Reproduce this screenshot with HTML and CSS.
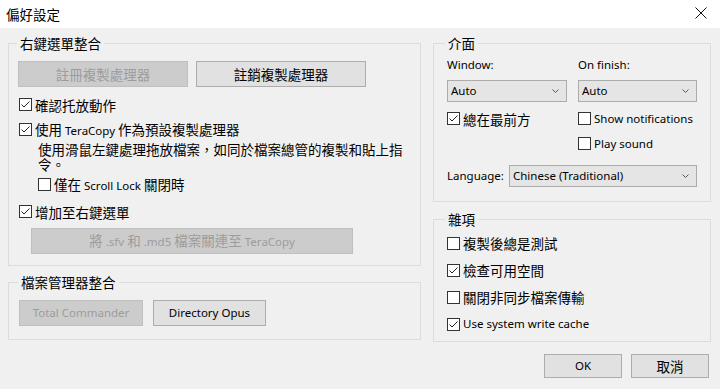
FILE: index.html
```html
<!DOCTYPE html>
<html lang="zh-Hant">
<head>
    <meta charset="UTF-8">
    <title>偏好設定</title>
    <link rel="stylesheet" href="styles.css">
</head>
<body>
    <div class="titlebar">
        <span class="title">偏好設定</span>
        <svg class="close" width="12" height="12" viewBox="0 0 12 12">
            <path d="M0.5 0.5 L11.5 11.5 M11.5 0.5 L0.5 11.5" stroke="#111" stroke-width="1" fill="none"/>
        </svg>
    </div>

    <div class="dialog">
        <div class="col-left">
            <fieldset class="group g-shell">
                <legend>右鍵選單整合</legend>
                <div class="btn-row">
                    <button class="btn btn-wide" disabled>註冊複製處理器</button>
                    <button class="btn btn-wide">註銷複製處理器</button>
                </div>
                <label class="check">
                    <span class="box"><svg viewBox="0 0 11 11"><path d="M1.5 5.5 L4 8 L9.5 2.5"/></svg></span><span>確認托放動作</span>
                </label>
                <label class="check">
                    <span class="box"><svg viewBox="0 0 11 11"><path d="M1.5 5.5 L4 8 L9.5 2.5"/></svg></span><span>使用 <span class="en">TeraCopy</span> 作為預設複製處理器</span>
                </label>
                <p class="desc">使用滑鼠左鍵處理拖放檔案，如同於檔案總管的複製和貼上指令。</p>
                <label class="check indent">
                    <span class="box"></span><span>僅在 <span class="en">Scroll Lock</span> 關閉時</span>
                </label>
                <label class="check check-menu">
                    <span class="box"><svg viewBox="0 0 11 11"><path d="M1.5 5.5 L4 8 L9.5 2.5"/></svg></span><span>增加至右鍵選單</span>
                </label>
                <button class="btn btn-assoc" disabled><span>將 <span class="en">.sfv</span> 和 <span class="en">.md5</span> 檔案關連至 <span class="en">TeraCopy</span></span></button>
            </fieldset>

            <fieldset class="group g-fm">
                <legend>檔案管理器整合</legend>
                <div class="btn-row">
                    <button class="btn en btn-tc" disabled>Total Commander</button>
                    <button class="btn en btn-do">Directory Opus</button>
                </div>
            </fieldset>
        </div>

        <div class="col-right">
            <fieldset class="group g-ui">
                <legend>介面</legend>
                <div class="ui-grid">
                    <div class="field">
                        <div class="field-label en">Window:</div>
                        <div class="select en">Auto<svg width="7" height="4" viewBox="0 0 7 4"><path d="M0.5 0.5 L3.5 3.5 L6.5 0.5"/></svg></div>
                        <label class="check">
                            <span class="box"><svg viewBox="0 0 11 11"><path d="M1.5 5.5 L4 8 L9.5 2.5"/></svg></span><span>總在最前方</span>
                        </label>
                    </div>
                    <div class="field">
                        <div class="field-label en">On finish:</div>
                        <div class="select en">Auto<svg width="7" height="4" viewBox="0 0 7 4"><path d="M0.5 0.5 L3.5 3.5 L6.5 0.5"/></svg></div>
                        <label class="check en">
                            <span class="box"></span><span>Show notifications</span>
                        </label>
                        <label class="check en">
                            <span class="box"></span><span>Play sound</span>
                        </label>
                    </div>
                </div>
                <div class="lang-row">
                    <span class="field-label en">Language:</span>
                    <div class="select select-lang en">Chinese (Traditional)<svg width="7" height="4" viewBox="0 0 7 4"><path d="M0.5 0.5 L3.5 3.5 L6.5 0.5"/></svg></div>
                </div>
            </fieldset>

            <fieldset class="group g-misc">
                <legend>雜項</legend>
                <label class="check">
                    <span class="box"></span><span>複製後總是測試</span>
                </label>
                <label class="check">
                    <span class="box"><svg viewBox="0 0 11 11"><path d="M1.5 5.5 L4 8 L9.5 2.5"/></svg></span><span>檢查可用空間</span>
                </label>
                <label class="check">
                    <span class="box"></span><span>關閉非同步檔案傳輸</span>
                </label>
                <label class="check en">
                    <span class="box"><svg viewBox="0 0 11 11"><path d="M1.5 5.5 L4 8 L9.5 2.5"/></svg></span><span>Use system write cache</span>
                </label>
            </fieldset>

            <div class="footer">
                <button class="btn btn-foot en">OK</button>
                <button class="btn btn-foot">取消</button>
            </div>
        </div>
    </div>
</body>
</html>
```

FILE: styles.css
```css
body {
    margin: 0;
    padding: 0;
    width: 720px;
    height: 389px;
    overflow: hidden;
    background-color: #f0f0f0;
    color: #000;
    font-family: "Noto Sans CJK TC", "Noto Sans", sans-serif;
    font-size: 13.5px;
}
.en {
    font-family: "Noto Sans", "Noto Sans CJK TC", sans-serif;
    font-size: 11.5px;
}
.titlebar {
    height: 28px;
    background-color: #fff;
    display: flex;
    align-items: center;
    justify-content: space-between;
    padding: 0 13px 0 6px;
}
.title {
    line-height: 18px;
}
.close {
    display: block;
    margin-top: -2px;
}
.dialog {
    display: flex;
    gap: 12px;
    padding: 6px 9px 0 8px;
}
.col-left {
    width: 413px;
}
.col-right {
    width: 278px;
}
fieldset.group {
    margin: 0;
    border: 1px solid #dcdcdc;
    min-width: 0;
}
fieldset.group legend {
    padding: 0 3px;
    margin-left: -2px;
    line-height: 18px;
}

/* left column */
.g-shell {
    padding: 9px 10px 11px 10px;
}
.g-fm {
    margin-top: 7px !important;
    padding: 9px 10px 13px 11px;
}
.btn-row {
    display: flex;
    gap: 8px;
    margin-left: -1px;
}
.btn {
    display: flex;
    align-items: center;
    justify-content: center;
    height: 26px;
    padding: 0;
    margin: 0;
    background-color: #e1e1e1;
    border: 1px solid #adadad;
    color: #000;
    font-family: "Noto Sans CJK TC", "Noto Sans", sans-serif;
    font-size: 13.5px;
    line-height: 18px;
}
.btn.en {
    font-family: "Noto Sans", "Noto Sans CJK TC", sans-serif;
    font-size: 11.5px;
}
.btn:disabled {
    background-color: #cccccc;
    border-color: #bfbfbf;
    color: #9c9c9c;
}
.btn-wide {
    width: 170px;
}
.check {
    display: flex;
    align-items: center;
    height: 25px;
    line-height: 18px;
    white-space: nowrap;
}
.box {
    flex: none;
    width: 11px;
    height: 11px;
    border: 1px solid #333;
    background-color: #fff;
    margin-right: 3px;
}
.box svg {
    display: block;
    width: 11px;
    height: 11px;
    fill: none;
    stroke: #222;
    stroke-width: 1;
}
.g-shell .btn-row + .check {
    margin-top: 5px;
}
.desc {
    margin: 0 0 0 19px;
    width: 375px;
    line-height: 15px;
}
.indent {
    margin-left: 19px;
}
.check-menu {
    margin-top: 2px;
}
.btn-assoc {
    width: 322px;
    margin: 4px 0 0 12px;
}
.btn-tc {
    width: 124px;
}
.btn-do {
    width: 113px;
    margin-left: 2px;
}

/* right column */
.g-ui {
    padding: 5px 13px 14px 13px;
}
.ui-grid {
    display: grid;
    grid-template-columns: 120px 119px;
    column-gap: 11px;
}
.field-label {
    line-height: 16px;
}
.select {
    display: flex;
    align-items: center;
    justify-content: space-between;
    height: 20px;
    margin-top: 7px;
    padding: 0 7px 0 3px;
    background-color: #e5e5e5;
    border: 1px solid #acacac;
    line-height: 16px;
}
.select svg {
    fill: none;
    stroke: #555;
    stroke-width: 1;
}
.field .select + .check {
    margin-top: 4px;
}
.lang-row {
    display: flex;
    align-items: center;
    justify-content: space-between;
    margin-top: 9px;
}
.lang-row .select {
    margin-top: 0;
}
.select-lang {
    width: 176px;
}
.g-misc {
    margin-top: 8px !important;
    padding: 2px 13px 4px 13px;
}
.g-misc .check {
    height: 26px;
    margin-bottom: 1px;
}
.g-misc .check:last-child {
    margin-bottom: 0;
}
.footer {
    display: flex;
    justify-content: flex-end;
    gap: 9px;
    margin: 12px 2px 0 0;
}
.btn-foot {
    width: 78px;
    height: 24px;
}
```
